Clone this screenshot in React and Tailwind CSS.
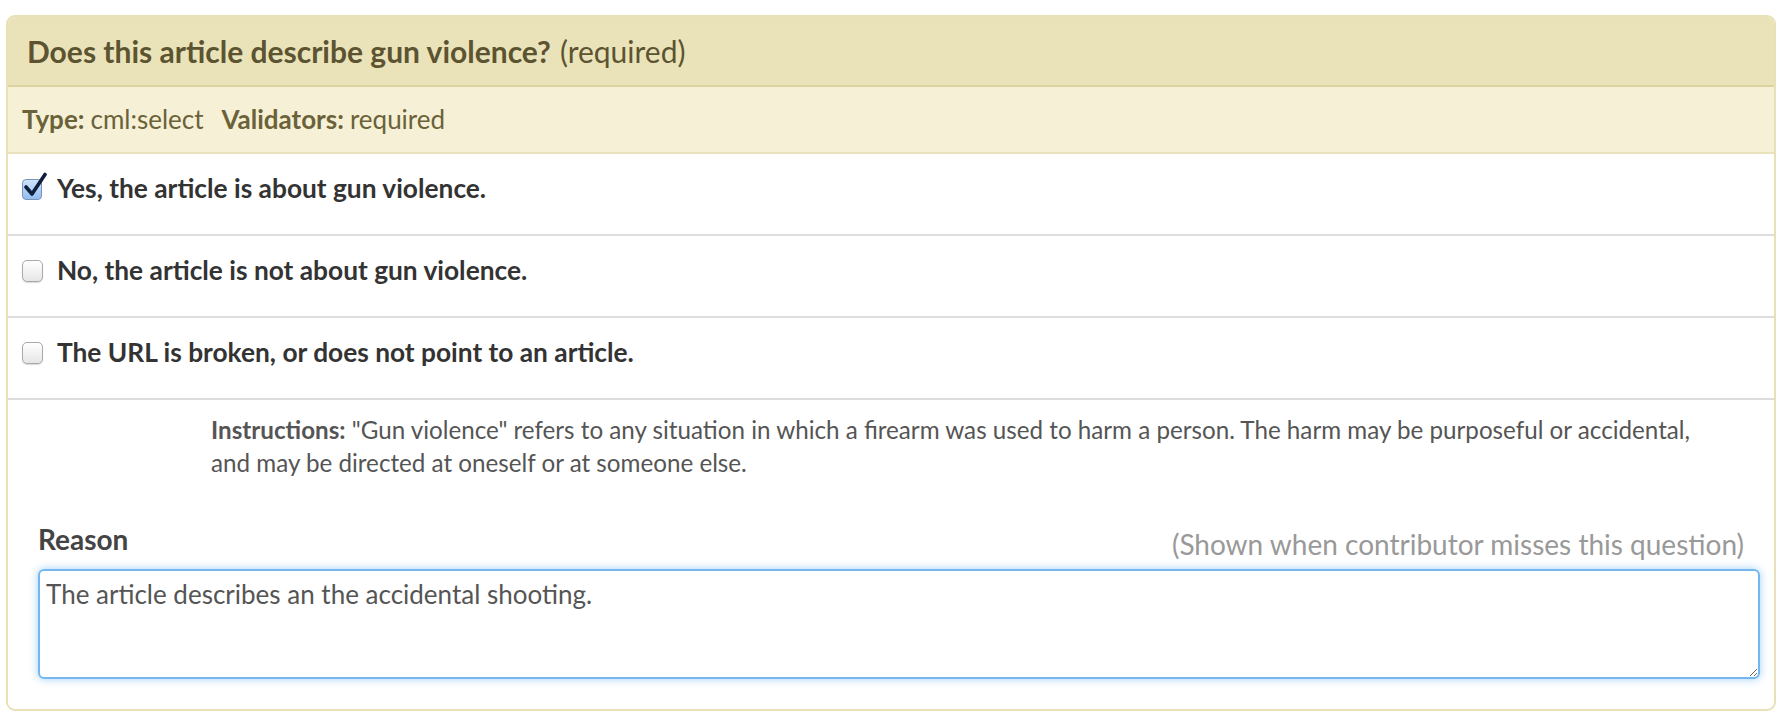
import React from 'react';

const font = { fontFamily: 'Lato, "Open Sans", sans-serif' };

function Checkbox({ checked }) {
  if (checked) {
    return (
      <span className="relative inline-block w-[21px] h-[22px] shrink-0">
        <span className="absolute left-0 top-[1px] w-[20px] h-[21px] rounded-[4px] border border-[#7b93b5] bg-gradient-to-b from-[#cfe4fb] to-[#8fbdf0]" />
        <svg className="absolute left-[1px] top-[-6px]" width="24" height="26" viewBox="0 0 24 26">
          <path d="M3 15 L9 22 L22 2.5" fill="none" stroke="#0f1f3d" strokeWidth="3.6" strokeLinecap="round" strokeLinejoin="round" />
        </svg>
      </span>
    );
  }
  return (
    <span className="inline-block w-[21px] h-[22px] shrink-0 rounded-[5px] border border-[#a9a9a9] bg-gradient-to-b from-white to-[#e6e6e6] shadow-[0_1px_1px_rgba(0,0,0,0.15)]" />
  );
}

function Option({ label, checked }) {
  return (
    <div className="h-[82px] border-b-2 border-[#dddddd] flex items-center pl-[14px] pb-[10px] gap-[14px]">
      <Checkbox checked={checked} />
      <span className="text-[26.3px] leading-[30px] font-bold text-[#333333] -translate-y-[1px]">{label}</span>
    </div>
  );
}

export default function App() {
  return (
    <div className="bg-white min-h-[725px] pt-[15px] pl-[6px] pr-[16px]" style={font}>
      <div className="border-2 border-[#e8e1b8] rounded-[9px] overflow-hidden">
        {/* Header */}
        <div className="h-[70px] bg-[#eae3ba] border-b-2 border-[#ddd3a0] flex items-center pl-[19px]">
          <span className="text-[30px] font-bold text-[#5c5331]">Does this article describe gun violence?</span>
          <span className="text-[30px] text-[#5c5331] ml-[9px]">(required)</span>
        </div>
        <div className="h-[67px] bg-[#f6f1d6] border-b-2 border-[#e9e2bd] flex items-center pl-[14px] text-[26px] text-[#6b6239]">
          <span className="font-bold">Type:</span>
          <span className="ml-[6px]">cml:select</span>
          <span className="font-bold ml-[18px]">Validators:</span>
          <span className="ml-[6px]">required</span>
        </div>

        <Option checked label="Yes, the article is about gun violence." />
        <Option label="No, the article is not about gun violence." />
        <Option label="The URL is broken, or does not point to an article." />

        {/* Instructions */}
        <div className="pl-[203px] pr-[50px] pt-[13px] text-[24.2px] leading-[33px] text-[#555555]">
          <span className="font-bold">Instructions:</span> "Gun violence" refers to any situation in which a firearm was used to harm a person. The harm may be purposeful or accidental, and may be directed at oneself or at someone else.
        </div>

        {/* Reason */}
        <div className="pl-[30px] pr-[14px] pt-[43px] pb-[30px]">
          <div className="flex items-end justify-between pr-[16px] mb-[13px]">
            <span className="text-[28px] leading-[34px] font-bold text-[#444444]">Reason</span>
            <span className="text-[28px] leading-[34px] text-[#999999] translate-y-[5px]">(Shown when contributor misses this question)</span>
          </div>
          <textarea
            defaultValue="The article describes an the accidental shooting."
            className="block w-full h-[110px] rounded-[6px] border-2 border-[#74b6f0] shadow-[0_0_8px_rgba(82,168,236,0.55)] px-[6px] py-[8px] text-[26px] leading-[31px] text-[#555555] outline-none resize-y"
            style={font}
          />
        </div>
      </div>
    </div>
  );
}
